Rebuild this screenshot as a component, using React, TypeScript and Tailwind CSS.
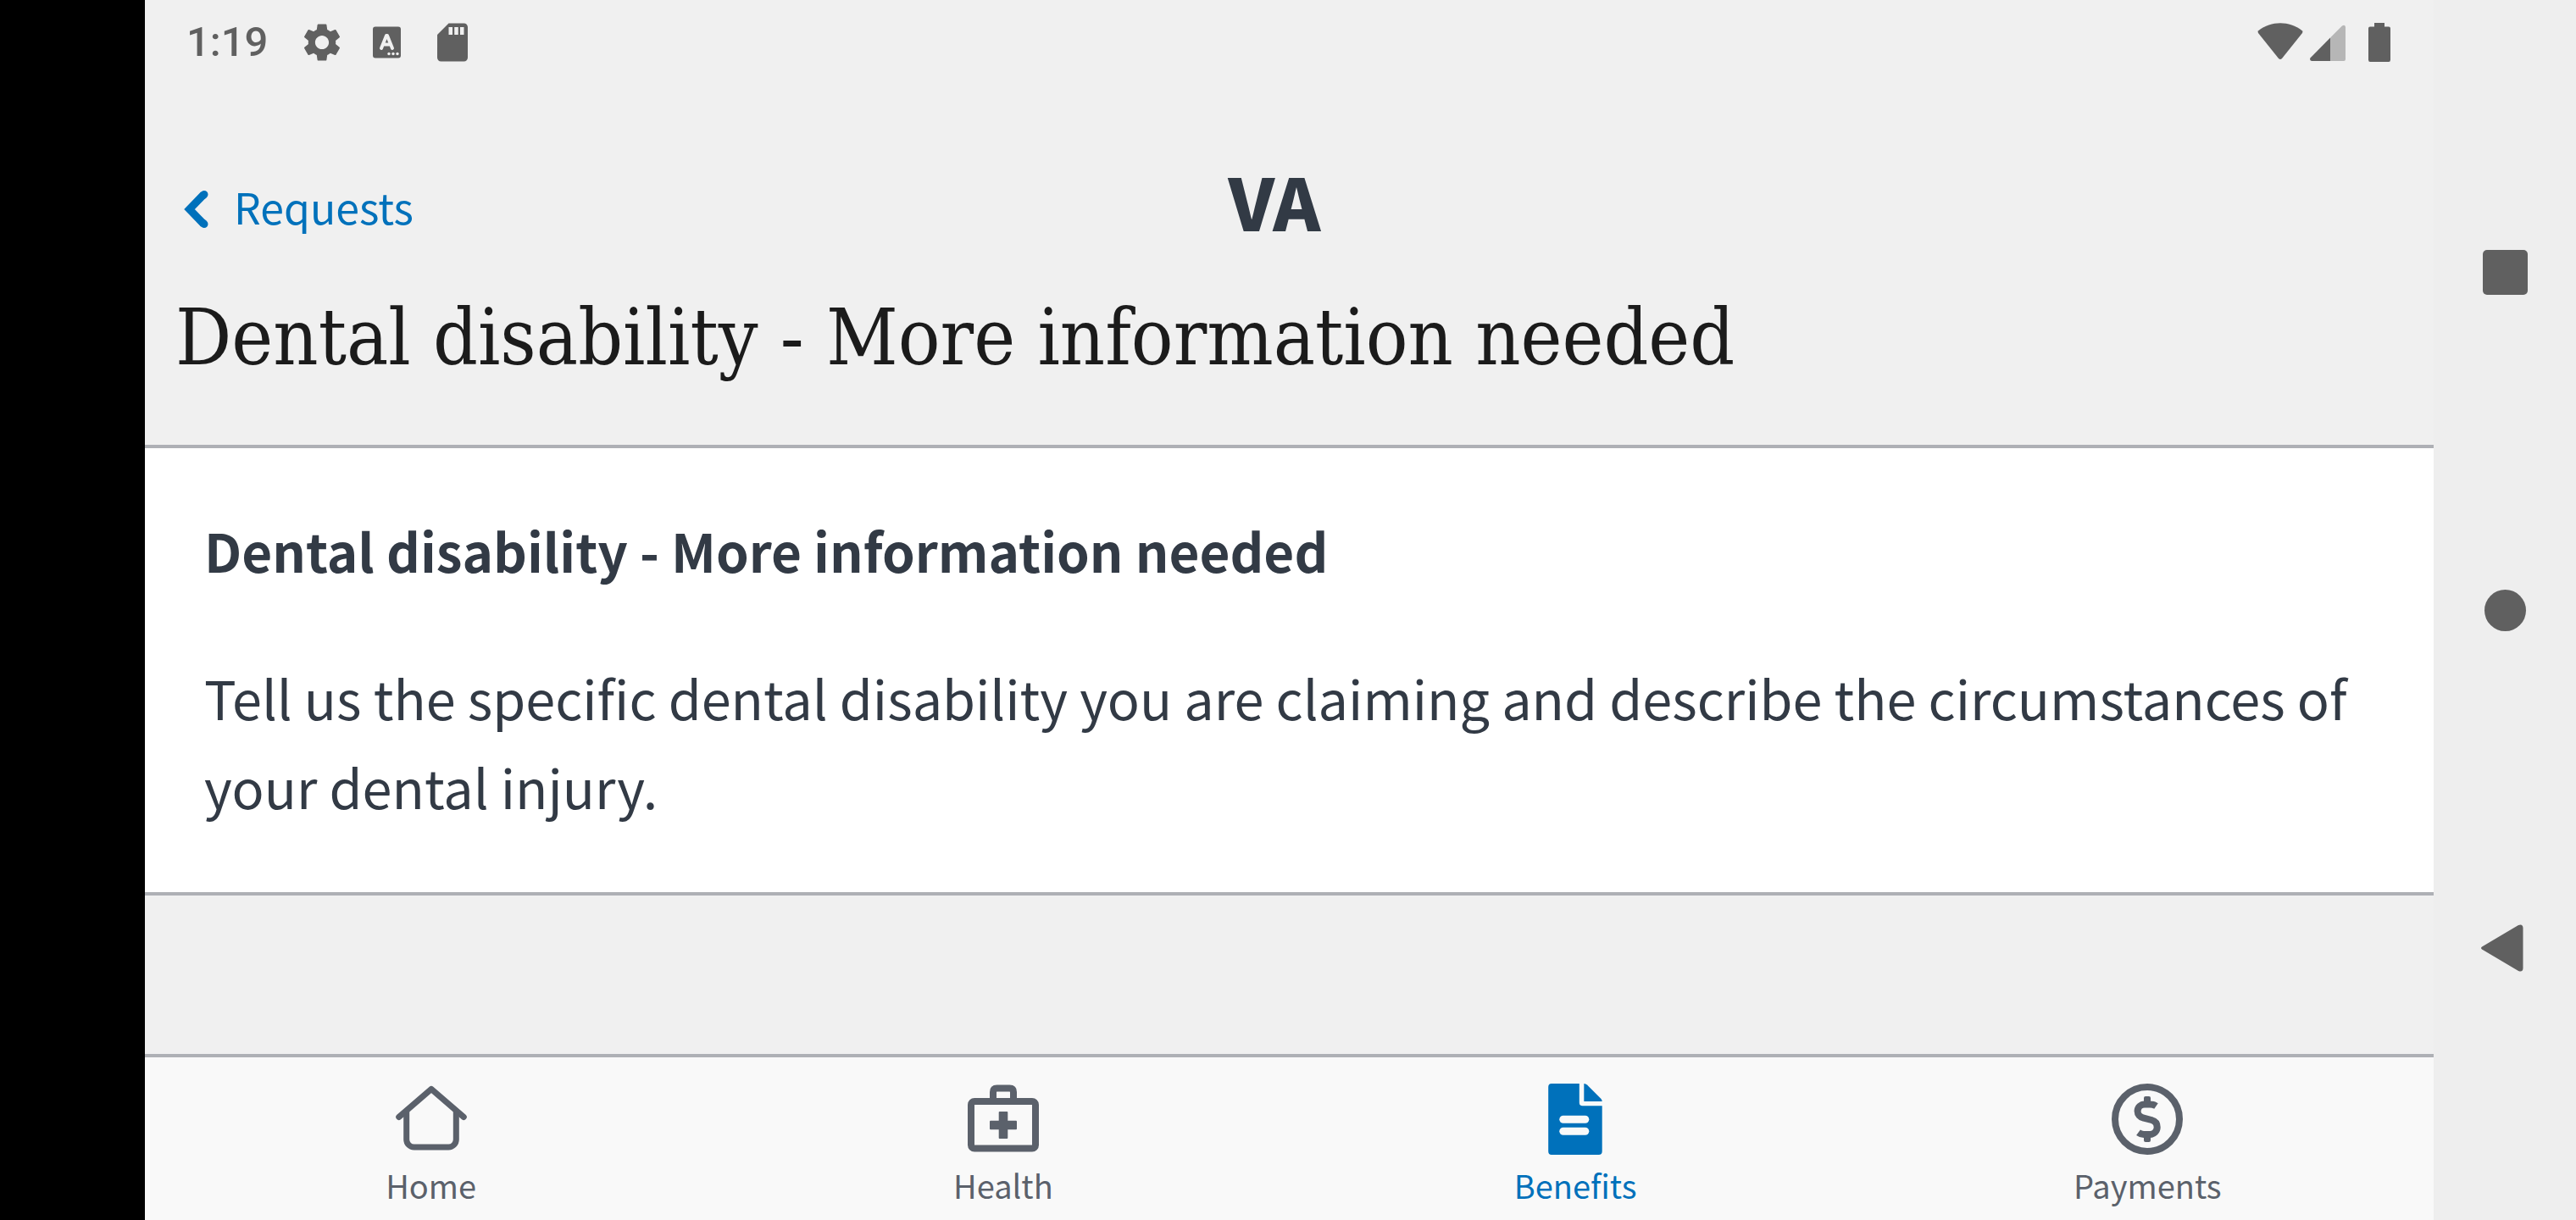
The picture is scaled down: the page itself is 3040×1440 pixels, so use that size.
import type { ReactNode } from "react";
import { MdSdCard, MdSettings } from "react-icons/md";

function KeyboardIcon() {
  return (
    <svg className="size-[54px]" viewBox="0 0 54 54" aria-hidden="true">
      <rect x="10" y="8.500" width="33" height="37" rx="3" fill="currentColor" />
      <path
        d="M20 34 26 19H27L33 34M22.500 29.500H30.500"
        fill="none"
        stroke="#f0f0f0"
        strokeWidth="4"
        strokeLinecap="round"
        strokeLinejoin="round"
      />
      <g fill="#f0f0f0">
        <circle cx="29" cy="40.500" r="1.700" />
        <circle cx="34" cy="40.500" r="1.700" />
        <circle cx="39" cy="40.500" r="1.700" />
      </g>
    </svg>
  );
}

function WifiIcon() {
  return (
    <svg className="h-[54px] w-[54px]" viewBox="0 0 54 54" aria-hidden="true">
      <path
        d="M1.200 13.200C16.500 1.400 37.500 1.400 52.800 13.200Q54 14.500 53 16L29 46Q27 48 25 46L1 16Q0 14.500 1.200 13.200Z"
        fill="currentColor"
      />
    </svg>
  );
}

function SignalIcon() {
  return (
    <svg className="h-[54px] w-[42px]" viewBox="0 0 42 54" aria-hidden="true">
      <path d="M24 21.500 38 7.500Q41 5.500 42 8.500V47Q42 49 40 49H24Z" fill="#b6b6b6" />
      <path d="M24 21.500V49H2Q-1 48 .600 45.200Z" fill="currentColor" />
    </svg>
  );
}

function BatteryIcon() {
  return (
    <svg className="h-[54px] w-[26px]" viewBox="0 0 26 54" aria-hidden="true">
      <path
        d="M7 4H19V8.500H24Q26 8.500 26 10.500V47.500Q26 50 24 50H2Q0 50 0 47.500V10.500Q0 8.500 2 8.500H7Z"
        fill="currentColor"
      />
    </svg>
  );
}

function ChevronLeftIcon() {
  return (
    <svg className="h-[62px] w-[34px]" viewBox="0 0 34 62" aria-hidden="true">
      <path
        d="M24.500 17.500 7.500 35 24.500 52.500"
        fill="none"
        stroke="currentColor"
        strokeWidth="9"
        strokeLinejoin="miter"
      />
      <path
        d="M25 17.500 24 18.500M25 52.500 24 51.500"
        stroke="currentColor"
        strokeWidth="9"
        strokeLinecap="round"
      />
    </svg>
  );
}

function HomeIcon() {
  return (
    <svg className="size-[84px]" viewBox="0 0 84 84" fill="none" stroke="currentColor" strokeWidth="7" aria-hidden="true">
      <path d="M3.700 39.500 42 6.500 80.300 39.500" strokeLinecap="round" strokeLinejoin="round" />
      <path d="M12.700 33V66A9 9 0 0 0 21.700 75H62.300A9 9 0 0 0 71.300 66V33" />
    </svg>
  );
}

function HealthIcon() {
  return (
    <svg className="size-[84px]" viewBox="0 0 84 84" fill="none" stroke="currentColor" strokeWidth="8" aria-hidden="true">
      <rect x="4" y="21" width="76" height="55.500" rx="4" />
      <path d="M30 20V10Q30 5.500 34.500 5.500H49.500Q54 5.500 54 10V20" />
      <g fill="currentColor" stroke="none">
        <rect x="36.700" y="33" width="10.600" height="32" rx="1" />
        <rect x="26" y="43.700" width="32" height="10.600" rx="1" />
      </g>
    </svg>
  );
}

function BenefitsIcon() {
  return (
    <svg className="size-[84px]" viewBox="0 0 84 84" fill="currentColor" aria-hidden="true">
      <path d="M14 0H46.800V22.500Q46.800 26.300 50.600 26.300H73.700V80Q73.700 84 69.700 84H14Q10.200 84 10.200 80V4Q10.200 0 14 0Z" />
      <path d="M52.300 0Q54.500 0 56 1.500L72.500 18Q73.700 19.500 73.700 21H52.300Z" />
      <g fill="#f9f9f9">
        <rect x="23.300" y="37.700" width="35" height="9" rx="4.500" />
        <rect x="23.300" y="51.700" width="35" height="9" rx="4.500" />
      </g>
    </svg>
  );
}

function PaymentsIcon() {
  return (
    <svg className="size-[84px]" viewBox="0 0 84 84" fill="none" stroke="currentColor" strokeWidth="8" aria-hidden="true">
      <circle cx="42" cy="42" r="38" />
      <path d="M52.500 26.500C50 24.800 48 24.400 45 24.400H39A8.400 8.400 0 0 0 30.600 32.500C30.600 36.500 33.500 39.500 37 40.300L47 43C51 44 53.700 47 53.700 51.500A8.500 8.500 0 0 1 45.200 60H38C35.500 60 33.500 59.300 31.500 57.800" />
      <rect x="38" y="15" width="8" height="9" rx="2" fill="currentColor" stroke="none" />
      <rect x="38" y="60" width="8" height="9" rx="2" fill="currentColor" stroke="none" />
    </svg>
  );
}

const tabs: { label: string; icon: ReactNode; active?: boolean }[] = [
  { label: "Home", icon: <HomeIcon /> },
  { label: "Health", icon: <HealthIcon /> },
  { label: "Benefits", icon: <BenefitsIcon />, active: true },
  { label: "Payments", icon: <PaymentsIcon /> },
];

function StatusBar() {
  return (
    <div className="flex h-[100px] items-center justify-between pr-[51px] pl-[49px] text-[#606060]">
      <div className="flex items-center">
        <time className="mr-[37px] font-[Roboto,sans-serif] text-[49px] leading-[56px] font-medium">1:19</time>
        <div className="flex gap-[23px]">
          <MdSettings className="size-[54px]" />
          <KeyboardIcon />
          <MdSdCard className="size-[54px]" />
        </div>
      </div>
      <div className="flex items-center">
        <WifiIcon />
        <div className="ml-[8px] flex gap-[27px]">
          <SignalIcon />
          <BatteryIcon />
        </div>
      </div>
    </div>
  );
}

function SystemNavigation() {
  return (
    <nav aria-label="System" className="flex w-[168px] shrink-0 flex-col bg-[#eeeeee] py-[122px] text-[#606060]">
      <button type="button" aria-label="Overview" className="flex flex-1 items-center justify-center">
        <span className="size-[53px] rounded-[5px] bg-current" />
      </button>
      <button type="button" aria-label="System home" className="flex flex-1 items-center justify-center">
        <span className="size-[49px] rounded-full bg-current" />
      </button>
      <button type="button" aria-label="Back" className="flex flex-1 items-center justify-center">
        <svg className="h-[56px] w-[56px]" viewBox="0 0 56 56" aria-hidden="true">
          <path d="M1 26.500 44 1Q49 -1 49.500 4V52Q49 57 44 55L1 29.500Q-1 28 1 26.500Z" fill="currentColor" />
        </svg>
      </button>
    </nav>
  );
}

export default function App() {
  return (
    <div className="flex min-h-screen bg-[#f0f0f0] font-['Noto_Sans_CJK_SC',sans-serif] text-[#323a45]">
      <div className="w-[171px] shrink-0 bg-black" />
      <div className="flex min-w-0 flex-1 flex-col">
        <StatusBar />
        <header className="border-b-4 border-[#aeb0b5] pt-[92px] pb-[68px]">
          <div className="grid grid-cols-[1fr_auto_1fr] items-end pr-[80px] pl-[45px]">
            <a href="#requests" className="flex items-center gap-[26px] text-[50px] leading-[74px] text-[#0071bb]">
              <ChevronLeftIcon />
              Requests
            </a>
            <span className="text-[85px] leading-[88px] font-black">VA</span>
          </div>
          <h1 className="mt-[61px] px-[36px] font-['DejaVu_Serif_Condensed','DejaVu_Serif',serif] text-[92px] leading-[116px] text-[#1b1b1b]">
            Dental disability - More information needed
          </h1>
        </header>
        <main className="flex-1">
          <section className="border-b-4 border-[#aeb0b5] bg-white px-[70px] pt-[68px] pb-[73px] leading-[105px]">
            <h2 className="text-[62px] font-bold">Dental disability - More information needed</h2>
            <p className="mt-[68px] text-[63px]">
              Tell us the specific dental disability you are claiming and describe the circumstances of your dental
              injury.
            </p>
          </section>
        </main>
        <nav aria-label="Main" className="grid grid-cols-4 border-t-4 border-[#aeb0b5] bg-[#f9f9f9] text-[#5b616b]">
          {tabs.map((tab) => (
            <a
              key={tab.label}
              href={`#${tab.label.toLowerCase()}`}
              aria-current={tab.active ? "page" : undefined}
              className={
                tab.active
                  ? "flex flex-col items-center gap-[12px] pt-[31px] pb-[17px] text-[#0071bb]"
                  : "flex flex-col items-center gap-[12px] pt-[31px] pb-[17px]"
              }
            >
              {tab.icon}
              <span className="text-[38px] leading-[48px]">{tab.label}</span>
            </a>
          ))}
        </nav>
      </div>
      <SystemNavigation />
    </div>
  );
}
